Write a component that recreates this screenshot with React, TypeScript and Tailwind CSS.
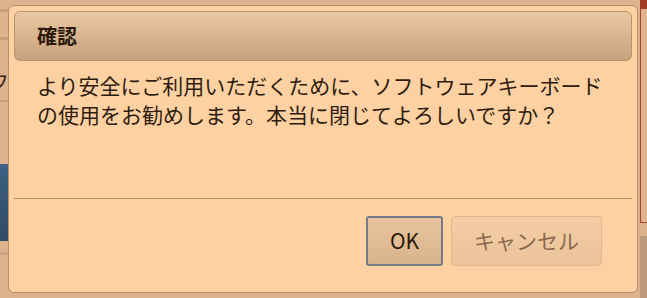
function LeftStrip() {
  return (
    <div className="w-[12px] h-full flex flex-col overflow-hidden">
      <div className="h-[9px]" />
      <div className="h-[3px] bg-[#c89e78]" />
      <div className="h-[25px]" />
      <div className="h-[3px] bg-[#c89e78]" />
      <div className="h-[30px] flex justify-start items-end">
        <span className="shrink-0 text-[20px] leading-none text-[#3a2616] -ml-[11px] translate-y-[22px]">フ</span>
      </div>
      <div className="h-[30px]" />
      <div className="h-[2px] bg-[#c89e78]" />
      <div className="h-[62px]" />
      <div className="h-[77px] bg-gradient-to-b from-[#3d6285] to-[#2f4a64]" />
      <div className="h-[11px]" />
      <div className="h-[3px] bg-[#c8a484]" />
    </div>
  );
}

function RightStrip() {
  return (
    <div className="w-[7px] h-full flex flex-col">
      <div className="h-[9px] bg-[#a03c24]" />
      <div className="h-[214px] border-l border-b border-[#a0452e] bg-[#e3b58e]" />
      <div className="h-[13px]" />
      <div className="flex-1 bg-[#bd9a7c]" />
    </div>
  );
}

export default function App() {
  return (
    <div
      className="relative w-[647px] h-[298px] overflow-hidden bg-[#dcb38d] flex justify-between"
      style={{ fontFamily: '"Noto Sans CJK JP", "Noto Sans", sans-serif' }}
    >
      <LeftStrip />
      <RightStrip />

      {/* dialog */}
      <div className="absolute left-[8px] top-[5px] w-[630px] h-[288px] rounded-[6px] border border-[#b98d67] bg-[#fed1a3] p-[5px] flex flex-col">
        <div className="h-[50px] rounded-[6px] border border-[#b99270] bg-gradient-to-b from-[#e9c9a3] to-[#c8a17d] flex items-center pl-[22px]">
          <span className="text-[20px] font-bold text-[#2b1a0c] leading-none">確認</span>
        </div>
        <div className="pl-[23px] pt-[10px] h-[137px] text-[21px] leading-[29px] text-[#2e1d0f]">
          <p>より安全にご利用いただくために、ソフトウェアキーボード</p>
          <p>の使用をお勧めします。本当に閉じてよろしいですか？</p>
        </div>
        <div className="h-px bg-[#b88a63]" />
        <div className="flex justify-end gap-[8px] pt-[17px] pr-[30px]">
          <button className="w-[77px] h-[50px] rounded-[3px] border-2 border-[#737c86] bg-gradient-to-b from-[#e8c49e] to-[#d9b38c] text-[21px] text-[#2a1a0c]">
            OK
          </button>
          <button className="w-[151px] h-[50px] rounded-[4px] border border-[#e0b890] bg-gradient-to-b from-[#f4cda4] to-[#ebc39b] text-[21px] text-[#8a6a50]">
            キャンセル
          </button>
        </div>
      </div>
    </div>
  );
}
